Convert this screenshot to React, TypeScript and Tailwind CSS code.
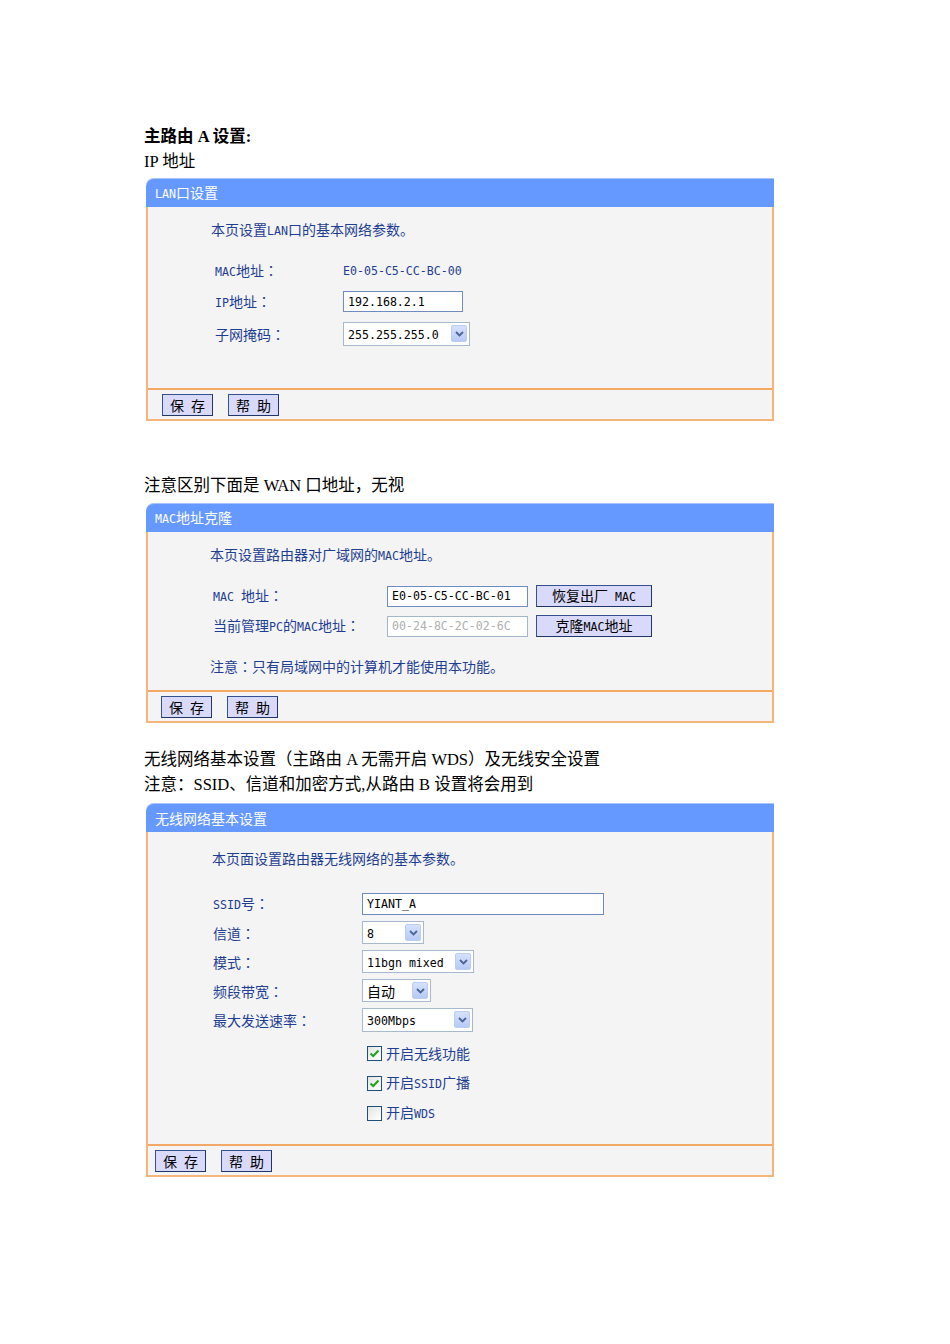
import React from 'react';

const MONO = "font-['DejaVu_Sans_Mono',monospace] text-[11.6px]";

// render ASCII runs in a half-width mono face, like the router's SimSun UI
function Mix({ t }: { t: string }) {
  const parts = t.split(/([\x21-\x7e](?:[\x20-\x7e]*[\x21-\x7e])?)/);
  return (
    <span>
      {parts.map((s, i) =>
        i % 2 === 1 ? (
          <span key={i} className={MONO}>
            {s}
          </span>
        ) : (
          s.split(/(：)/).map((c, j) =>
            c === '：' ? (
              <span key={i + '-' + j} className="font-['Noto_Sans_CJK_JP',sans-serif]">
                ：
              </span>
            ) : (
              c.replace(/ /g, '\u2002')
            )
          )
        )
      )}
    </span>
  );
}

function Chevron() {
  return (
    <span className="w-[16px] h-[17px] mr-[2px] rounded-[2px] bg-gradient-to-b from-[#d5e1fd] to-[#b7caf6] border border-[#bccdf2] flex items-center justify-center">
      <svg width="9" height="6" viewBox="0 0 9 6">
        <path d="M1 1 L4.5 4.5 L8 1" fill="none" stroke="#4a6594" strokeWidth="1.8" />
      </svg>
    </span>
  );
}

function Select({ value, w, h = 'h-[23px]' }: { value: string; w: string; h?: string }) {
  return (
    <div className={`${w} ${h} bg-white border border-[#a7b8cf] flex items-center justify-between pl-[4px] text-black`}>
      <Mix t={value} />
      <Chevron />
    </div>
  );
}

function Input({ value, w, h = 'h-[21px]', dim }: { value: string; w: string; h?: string; dim?: boolean }) {
  return (
    <div
      className={`${w} ${h} bg-white border flex items-center pl-[4px] ${MONO} ${dim ? 'text-[#b0b0b0] border-[#a5b5cc]' : 'text-black border-[#6f8cc0]'}`}
    >
      {value}
    </div>
  );
}

function Btn({ label, w = 'w-[51px]' }: { label: string; w?: string }) {
  return (
    <div className={`${w} h-[22px] bg-[#d9dafa] border border-[#34508f] border-r-[#20366a] border-b-[#20366a] flex items-center justify-center text-black`}>
      <Mix t={label} />
    </div>
  );
}

function Panel({
  title,
  bodyH,
  footPl,
  children,
}: {
  title: string;
  bodyH: string;
  footPl: string;
  children: React.ReactNode;
}) {
  return (
    <div className="w-[628px] ml-[2px] font-['Noto_Sans_CJK_SC',sans-serif] text-[14px] leading-[20px]">
      <div className="h-[29px] bg-[#6699ff] border-t border-[#a8c2ff] rounded-tl-[8px] pl-[9px] flex items-center text-white">
        <Mix t={title} />
      </div>
      <div className="border-x-2 border-b-2 border-[#f7b57a] bg-[#f4f4f4]">
        <div className={`${bodyH} text-[#1e3e92]`}>{children}</div>
        <div className={`h-[31px] border-t-2 border-[#f4a865] flex items-center gap-[15px] ${footPl}`}>
          <Btn label="保 存" />
          <Btn label="帮 助" />
        </div>
      </div>
    </div>
  );
}

function Row({ label, labelW, h, children }: { label: string; labelW: string; h: string; children: React.ReactNode }) {
  return (
    <div className={`flex items-center ${h}`}>
      <div className={labelW}>
        <Mix t={label} />
      </div>
      {children}
    </div>
  );
}

function Check({ on, label }: { on: boolean; label: string }) {
  return (
    <div className="h-[30px] flex items-center pl-[219px]">
      <span className="w-[15px] h-[15px] border border-[#1f4f7c] bg-gradient-to-br from-[#e4e4df] to-white flex items-center justify-center">
        {on && (
          <svg width="11" height="9" viewBox="0 0 11 9">
            <path d="M1.5 4.5 L4.2 7 L9.5 1.5" fill="none" stroke="#21a121" strokeWidth="2" />
          </svg>
        )}
      </span>
      <span className="ml-[4px]">
        <Mix t={label} />
      </span>
    </div>
  );
}

export default function App() {
  const doc = "font-['Liberation_Serif','Noto_Sans_CJK_SC',serif] text-[16.5px] leading-[25px] text-black";
  return (
    <div className="w-[950px] min-h-[1344px] bg-white pl-[144px] pt-[124px]">
      <p className={`${doc} font-bold`}>主路由 A 设置:</p>
      <p className={doc}>IP 地址</p>

      <div className="mt-[4px]">
        <Panel title="LAN口设置" bodyH="h-[181px] pt-[12px]" footPl="pl-[14px]">
          <div className="pl-[63px]">
            <Mix t="本页设置LAN口的基本网络参数。" />
          </div>
          <div className="pl-[67px] mt-[14px]">
            <Row label="MAC地址：" labelW="w-[128px]" h="h-[31px]">
              <span className={MONO}>E0-05-C5-CC-BC-00</span>
            </Row>
            <Row label="IP地址：" labelW="w-[128px]" h="h-[31px]">
              <Input value="192.168.2.1" w="w-[120px]" />
            </Row>
            <Row label="子网掩码：" labelW="w-[128px]" h="h-[33px]">
              <Select value="255.255.255.0" w="w-[127px]" h="h-[24px]" />
            </Row>
          </div>
        </Panel>
      </div>

      <p className={`${doc} mt-[52px]`}>注意区别下面是 WAN 口地址，无视</p>

      <div className="mt-[5px]">
        <Panel title="MAC地址克隆" bodyH="h-[158px] pt-[12px]" footPl="pl-[13px]">
          <div className="pl-[62px]">
            <Mix t="本页设置路由器对广域网的MAC地址。" />
          </div>
          <div className="pl-[65px] mt-[15px]">
            <Row label="MAC 地址：" labelW="w-[174px]" h="h-[30px]">
              <Input value="E0-05-C5-CC-BC-01" w="w-[141px]" />
              <div className="ml-[8px]">
                <Btn label="恢复出厂 MAC" w="w-[116px]" />
              </div>
            </Row>
            <Row label="当前管理PC的MAC地址：" labelW="w-[174px]" h="h-[30px]">
              <Input value="00-24-8C-2C-02-6C" w="w-[141px]" dim />
              <div className="ml-[8px]">
                <Btn label="克隆MAC地址" w="w-[116px]" />
              </div>
            </Row>
          </div>
          <div className="pl-[62px] mt-[15px]">
            <Mix t="注意：只有局域网中的计算机才能使用本功能。" />
          </div>
        </Panel>
      </div>

      <p className={`${doc} mt-[24px]`}>无线网络基本设置（主路由 A 无需开启 WDS）及无线安全设置</p>
      <p className={doc}>注意：SSID、信道和加密方式,从路由 B 设置将会用到</p>

      <div className="mt-[6px]">
        <Panel title="无线网络基本设置" bodyH="h-[312px] pt-[16px]" footPl="pl-[7px]">
          <div className="pl-[64px]">
            <Mix t="本页面设置路由器无线网络的基本参数。" />
          </div>
          <div className="pl-[65px] mt-[21px]">
            <Row label="SSID号：" labelW="w-[149px]" h="h-[29px]">
              <Input value="YIANT_A" w="w-[242px]" h="h-[22px]" />
            </Row>
            <Row label="信道：" labelW="w-[149px]" h="h-[29px]">
              <Select value="8" w="w-[62px]" />
            </Row>
            <Row label="模式：" labelW="w-[149px]" h="h-[29px]">
              <Select value="11bgn mixed" w="w-[112px]" />
            </Row>
            <Row label="频段带宽：" labelW="w-[149px]" h="h-[29px]">
              <Select value="自动" w="w-[69px]" />
            </Row>
            <Row label="最大发送速率：" labelW="w-[149px]" h="h-[29px]">
              <Select value="300Mbps" w="w-[111px]" h="h-[24px]" />
            </Row>
          </div>
          <div className="mt-[4px]">
            <Check on label="开启无线功能" />
            <Check on label="开启SSID广播" />
            <Check on={false} label="开启WDS" />
          </div>
        </Panel>
      </div>
    </div>
  );
}
